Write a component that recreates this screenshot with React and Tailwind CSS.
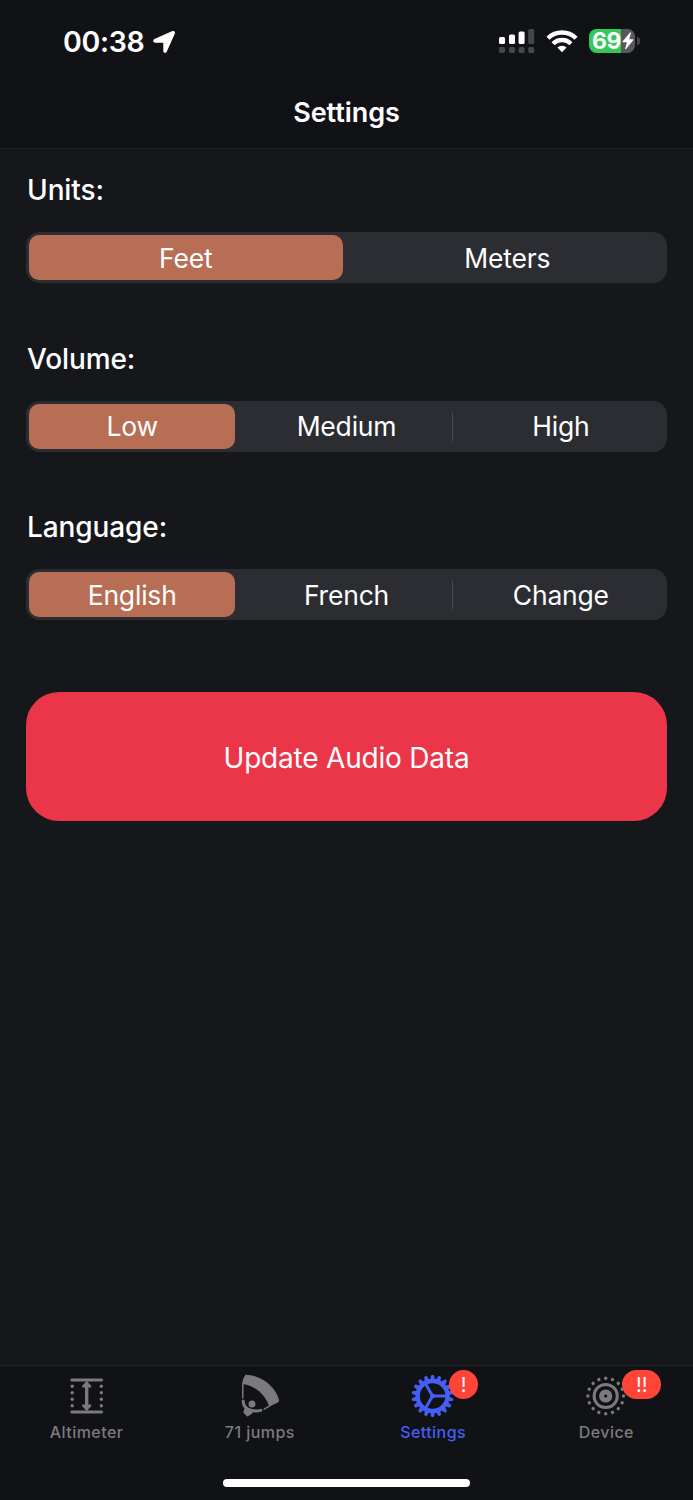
import React from 'react';

const settings = [
  { label: 'Units:', options: ['Feet', 'Meters'] },
  { label: 'Volume:', options: ['Low', 'Medium', 'High'] },
  { label: 'Language:', options: ['English', 'French', 'Change'] },
];

// evenly spaced angles for the gear teeth and the dots around the device icon
const spread = (count) => Array.from({ length: count }, (_, i) => (i * 360) / count);

const AltimeterIcon = () => (
  <svg viewBox="0 0 48 48" className="w-12 h-12" fill="none" stroke="currentColor">
    <path d="M8.8 8h29.8M8.8 40h29.8" strokeWidth="3" strokeLinecap="round" />
    <path d="M23.7 12v24" strokeWidth="3.4" />
    <path d="M23.7 10l4 4.6h-8zM23.7 38l4-4.6h-8z" fill="currentColor" strokeWidth="1.6" strokeLinejoin="round" />
    {[14.3, 20.8, 27.2, 33.7].map((y) => (
      <g key={y} fill="currentColor" stroke="none">
        <circle cx="9.2" cy={y} r="1.7" />
        <circle cx="38.3" cy={y} r="1.7" />
      </g>
    ))}
  </svg>
);

const JumpsIcon = () => (
  <svg viewBox="0 0 48 48" className="w-12 h-12" fill="none" stroke="currentColor" strokeLinecap="round" strokeLinejoin="round">
    <path d="M9.6 3.3C25 3.6 39 14 42.6 28.4Q42.8 29.4 42 29.9L33.6 34C29.6 22.6 19.5 13.2 6.6 11.4Q7 7 9.6 3.3z" fill="currentColor" strokeWidth="1" />
    <path d="M6.8 12v13.8M33.4 34.2l-5.2 3" strokeWidth="1.5" />
    <path d="M7.2 29c0 3.600 1.200 6 4.200 7.800 3.800 2.300 8.200 3 13.400 1.600" strokeWidth="3" />
    <path d="M9 37l-.8 3.400 3.300 3.200 3.400-2 2-2.600z" fill="currentColor" strokeWidth="1.6" />
    <circle cx="16" cy="32" r="3.5" fill="currentColor" stroke="none" />
  </svg>
);

const GearIcon = () => (
  <svg viewBox="0 0 48 48" className="w-12 h-12" fill="none" stroke="currentColor">
    <circle cx="23.6" cy="24" r="15" strokeWidth="4.4" />
    {spread(18).map((a) => (
      <path key={a} d="M21.3 8l.7-4q.2-1 1-1h1.2q.8 0 1 1l.7 4z" fill="currentColor" stroke="none" transform={`rotate(${a} 23.6 24)`} />
    ))}
    {spread(3).map((a) => (
      <path key={a} d="M23.6 24h14" strokeWidth="3" transform={`rotate(${a} 23.6 24)`} />
    ))}
    <circle cx="23.6" cy="24" r="2.4" fill="currentColor" stroke="none" />
  </svg>
);

const DeviceIcon = () => (
  <svg viewBox="0 0 48 48" className="w-12 h-12" fill="none" stroke="currentColor">
    <circle cx="23.7" cy="24" r="11.6" strokeWidth="3" />
    <circle cx="23.7" cy="24" r="4.1" strokeWidth="5" />
    {spread(16).map((a) => (
      <circle key={a} cx="23.7" cy="6.2" r="1.7" fill="currentColor" stroke="none" transform={`rotate(${a} 23.7 24)`} />
    ))}
  </svg>
);

const tabs = [
  { label: 'Altimeter', icon: AltimeterIcon },
  { label: '71 jumps', icon: JumpsIcon },
  { label: 'Settings', icon: GearIcon, active: true, badge: '!' },
  { label: 'Device', icon: DeviceIcon, badge: '!!' },
];

const StatusBar = () => (
  <div className="flex items-start justify-between h-[82px] pl-[63px] pr-[53px] pt-[26px]">
    <div className="flex items-center gap-[7px] h-8">
      <span className="text-[28.5px] leading-8 font-semibold tracking-[-0.3px]">00:38</span>
      <svg viewBox="0 0 24 24" className="w-6 h-6" fill="currentColor" stroke="currentColor" strokeWidth="1.4" strokeLinejoin="round">
        <path d="M20.8 1.7c1-.4 1.8.4 1.4 1.4l-8 18.2c-.6 1.3-2.2 1-2.2-.4v-8.3c0-.4-.2-.6-.6-.6H3.2c-1.5 0-1.8-1.7-.5-2.3z" />
      </svg>
    </div>
    <div className="flex items-center h-[30px]">
      <svg viewBox="0 0 36 26" className="w-9 h-[26px]" fill="currentColor">
        <rect x="0" y="9" width="6" height="7" rx="1.5" />
        <rect x="10" y="6.5" width="6" height="9.5" rx="1.5" />
        <rect x="19.6" y="3.5" width="6" height="12.5" rx="1.5" />
        <g fill="#45464a">
          <rect x="29.2" y="1" width="6" height="15" rx="1.5" />
          <rect x="0" y="19" width="6" height="6" rx="1.5" />
          <rect x="10" y="19" width="6" height="6" rx="1.5" />
          <rect x="19.6" y="19" width="6" height="6" rx="1.5" />
          <rect x="29.2" y="19" width="6" height="6" rx="1.5" />
        </g>
      </svg>
      <svg viewBox="0 0 32 24" className="w-8 h-6 ml-[11px]" fill="none" stroke="currentColor" strokeWidth="4.4">
        <path d="M2 9.2a20 20 0 0 1 28 0" />
        <path d="M7.1 14.7a12.4 12.4 0 0 1 17.8 0" />
        <path d="M16 23.2l-4.6-4.6a6.5 6.5 0 0 1 9.2 0z" fill="currentColor" stroke="none" />
      </svg>
      <div className="relative flex items-center w-[46px] h-6 ml-[11px] rounded-[7.5px] bg-[linear-gradient(to_right,#34c759_32px,#57585c_32px)]">
        <span className="pl-[3px] text-[23px] leading-6 font-bold tracking-[-0.5px]">69</span>
        <svg viewBox="0 0 12 18" className="absolute left-[33px] top-[3px] w-3 h-[18px]" fill="currentColor">
          <path d="M8 .5L.6 9.6q-.4.7.4.7h3.8L3.2 16.6q0 1 .9.3L11.4 8q.4-.7-.4-.7H7.3L8.9 1Q8.8-.2 8 .5z" />
        </svg>
      </div>
      <div className="w-[3px] h-2 ml-0.5 rounded-r-full bg-[#45464a]" />
    </div>
  </div>
);

const SegmentedControl = ({ options }) => (
  <div className="flex gap-2 h-[51px] p-[3px] rounded-[14px] bg-[#2c2d32]">
    {options.map((option, i) => (
      <button
        key={option}
        className={`relative flex-1 basis-0 pt-[2px] rounded-[10px] text-[26.5px] tracking-[-0.2px] ${i === 0 ? 'bg-[#b76e54]' : ''}`}
      >
        {option}
        {i > 1 && <span className="absolute -left-[6px] top-[9px] w-px h-7 bg-[#4a4b50]" />}
      </button>
    ))}
  </div>
);

const TabBar = () => (
  <nav className="flex h-[135px] border-t border-[#202226] bg-[#111216]">
    {tabs.map((tab) => {
      const Icon = tab.icon;
      return (
        <div
          key={tab.label}
          className={`flex-1 flex flex-col items-center pt-[6px] ${tab.active ? 'text-[#435ff5]' : 'text-[#7b7b7d]'}`}
        >
          <div className="relative">
            <Icon />
            {tab.badge && (
              <span
                className={`absolute -top-[2px] left-[40px] flex items-center justify-center h-[29px] rounded-full bg-[#ff453a] text-white text-xl ${
                  tab.badge.length > 1 ? 'w-[39px]' : 'w-[29px]'
                }`}
              >
                {tab.badge}
              </span>
            )}
          </div>
          <span className="text-base leading-6 font-medium tracking-[0.45px]">{tab.label}</span>
        </div>
      );
    })}
  </nav>
);

const App = () => {
  return (
    <div className="relative flex flex-col w-[693px] h-[1500px] overflow-hidden bg-[#16171b] text-white font-[Inter,sans-serif]">
      <header className="h-[149px] border-b border-[#232428] bg-[#111216]">
        <StatusBar />
        <h1 className="text-center text-[27px] leading-[62px] font-semibold tracking-[-0.05px]">Settings</h1>
      </header>

      <main className="flex-1 px-[26px] pt-6">
        <div className="flex flex-col gap-[58.5px]">
          {settings.map((group) => (
            <section key={group.label}>
              <h2 className="mb-[25px] pl-px text-[28px] leading-[34px] font-medium tracking-[-0.1px]">{group.label}</h2>
              <SegmentedControl options={group.options} />
            </section>
          ))}
        </div>
        <button className="w-full h-[129px] mt-[72px] pt-0.5 rounded-[33px] bg-[#eb364a] text-[28px] tracking-[-0.2px]">
          Update Audio Data
        </button>
      </main>

      <TabBar />

      {/* Home indicator */}
      <div className="absolute left-[223px] bottom-[13px] w-[247px] h-2 rounded-full bg-white" />
    </div>
  );
};

export default App;
